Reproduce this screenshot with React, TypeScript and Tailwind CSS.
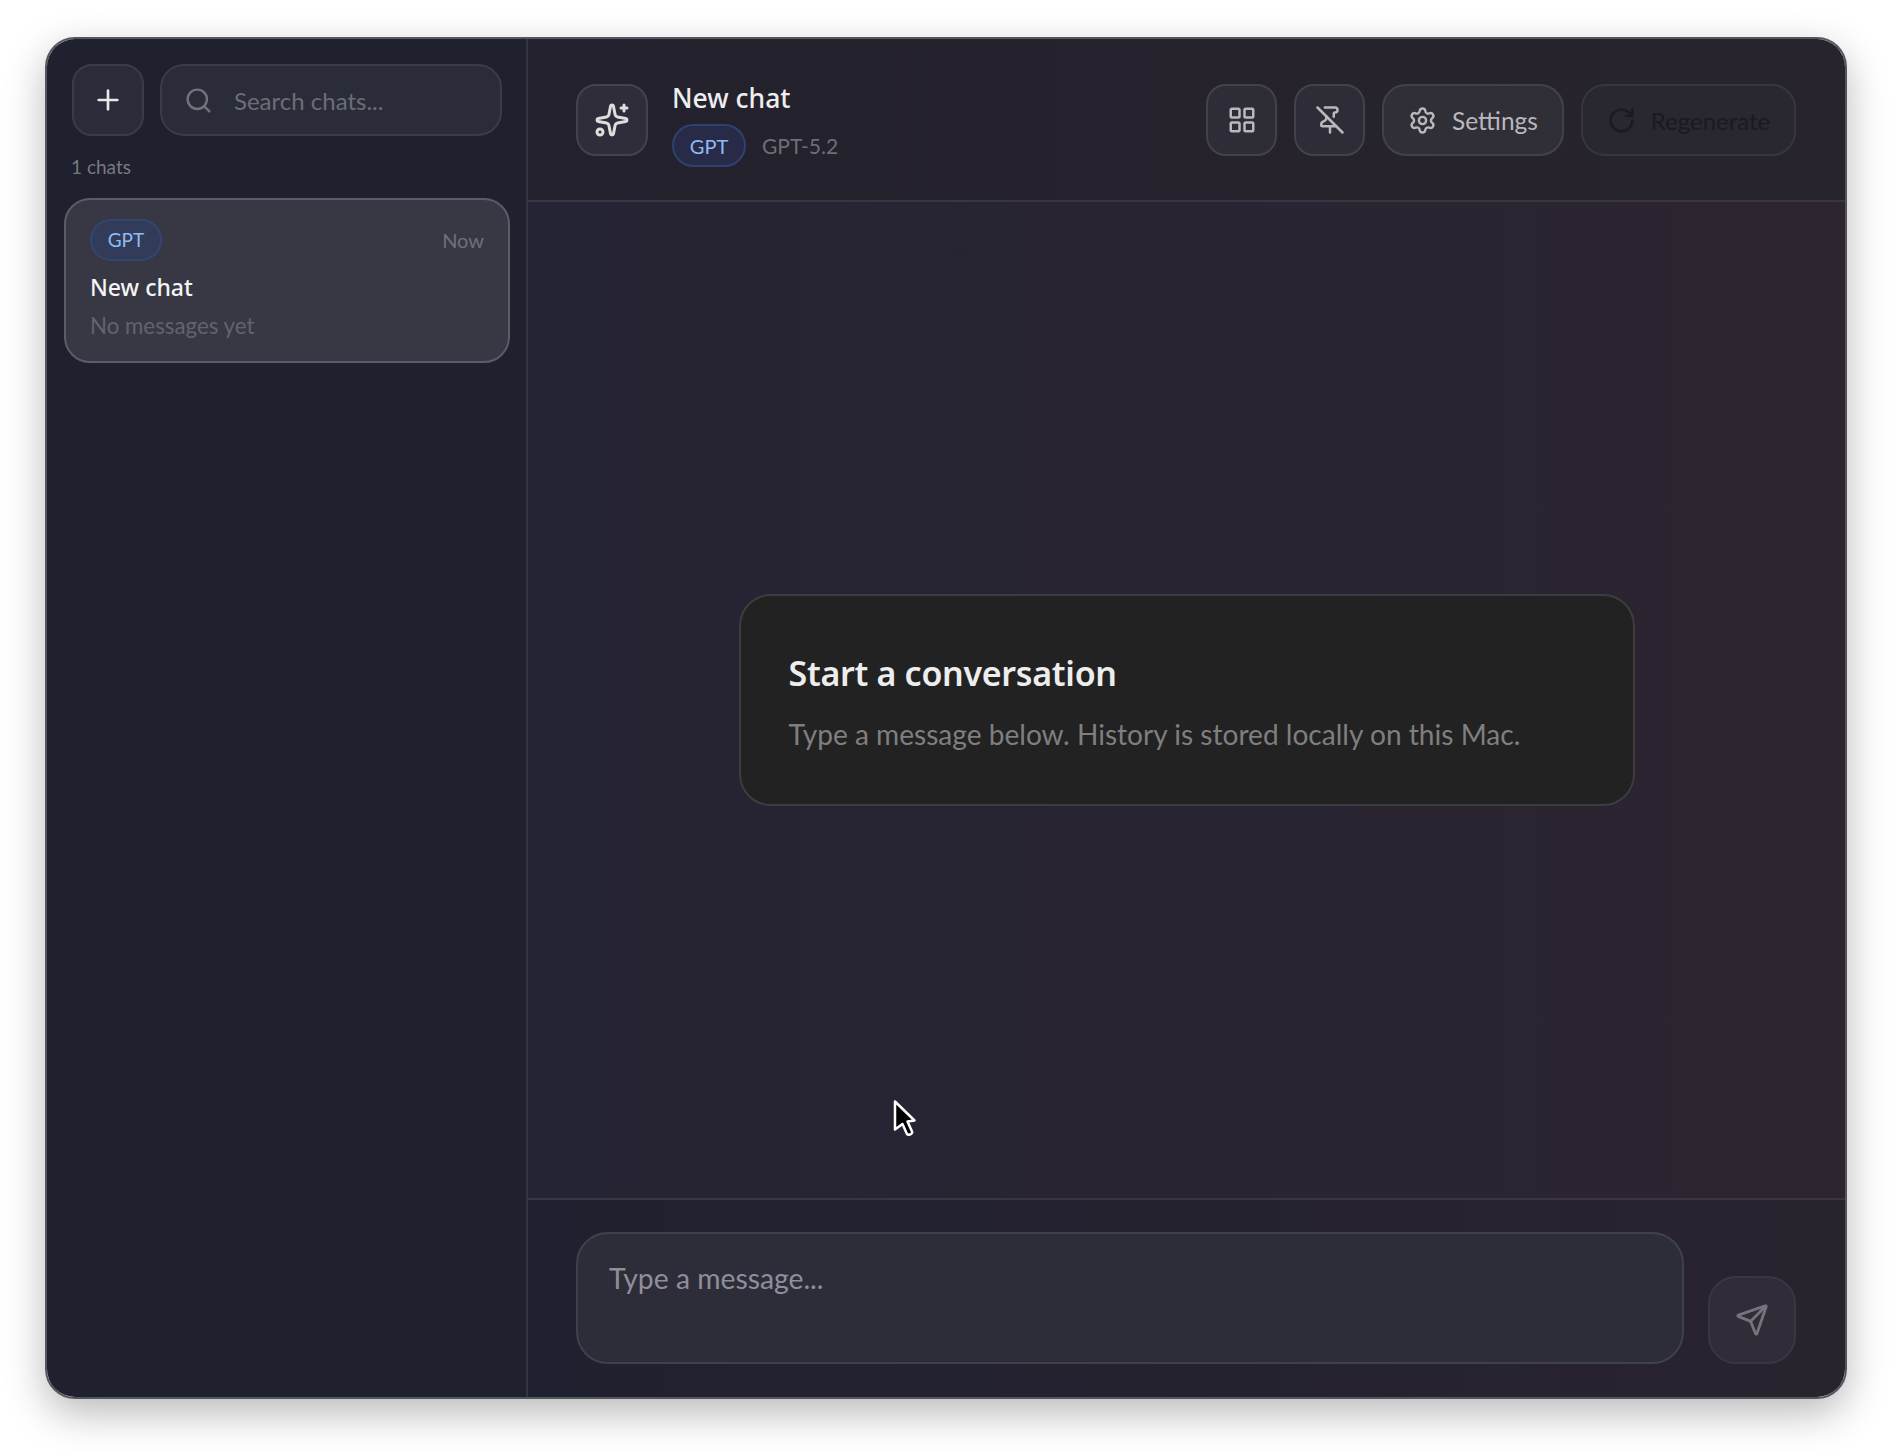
import { Plus, Search, Sparkles, LayoutGrid, PinOff, Settings, RotateCw, Send } from "lucide-react";

export default function App() {
  return (
    <div className="relative h-[1452px] w-[1892px] overflow-hidden bg-white pl-[45px] pt-[37px] font-['Lato',sans-serif]">
      <div className="flex h-[1362px] w-[1802px] overflow-hidden rounded-[30px] border-2 border-[#55555e] shadow-[0_14px_40px_rgba(0,0,0,0.28)]">
        {/* Sidebar */}
        <aside className="flex h-full w-[481px] shrink-0 flex-col border-r-2 border-[#34343f] bg-[#1f212e] pl-[17px] pr-[15px] pt-[25px]">
          <div className="flex gap-[16px] pl-[8px] pr-[9px]">
            <button className="flex h-[72px] w-[72px] shrink-0 items-center justify-center rounded-[20px] border-2 border-[#3b3c47] bg-[#2b2c39] text-[#e8e8ea]">
              <Plus size={32} strokeWidth={2} />
            </button>
            <div className="flex h-[72px] min-w-0 flex-1 items-center gap-[21px] rounded-[24px] border-2 border-[#3b3c47] bg-[#2b2c39] pl-[22px]">
              <Search size={29} strokeWidth={2} className="shrink-0 text-[#72727b]" />
              <input
                placeholder="Search chats..."
                className="mt-[2px] w-full bg-transparent text-[24px] outline-none placeholder:text-[#6d6d77]"
              />
            </div>
          </div>
          <div className="mt-[18px] pl-[7px] text-[19px] leading-[26px] text-[#797981]">1 chats</div>
          <div className="mt-[18px] h-[165px] w-[446px] rounded-[26px] border-2 border-[#5b5c67] bg-[#373844] px-[24px] pt-[19px]">
            <div className="flex items-center justify-between">
              <span className="flex h-[42px] w-[72px] items-center justify-center rounded-full border-2 border-[#33466f] bg-[#323c5a] text-[19px] text-[#8fbcf5]">
                GPT
              </span>
              <span className="text-[20px] text-[#6f6f79]">Now</span>
            </div>
            <div className="mt-[9px] font-['Noto_Sans',sans-serif] text-[23px] font-medium leading-[34px] text-[#f4f4f5]">New chat</div>
            <div className="mt-[7px] text-[22.3px] leading-[30px] text-[#62636d]">No messages yet</div>
          </div>
        </aside>

        {/* Main */}
        <main className="flex h-full min-w-0 flex-1 flex-col">
          <header className="flex h-[163px] shrink-0 items-start justify-between border-b-2 border-[#383741] bg-linear-to-r from-[#23212d] to-[#28242d] pl-[48px] pr-[49px] pt-[45px]">
            <div className="flex gap-[24px]">
              <button className="flex h-[72px] w-[72px] items-center justify-center rounded-[20px] border-2 border-[#44434d] bg-[#2e2d39] text-[#dededf]">
                <Sparkles size={36} strokeWidth={2} />
              </button>
              <div className="-mt-[5px]">
                <div className="font-['Noto_Sans',sans-serif] text-[26.5px] font-medium leading-[38px] text-[#eeeeef]">New chat</div>
                <div className="mt-[7px] flex items-center gap-[16px]">
                  <span className="flex h-[43px] w-[74px] items-center justify-center rounded-full border-2 border-[#2e4170] bg-[#272b47] text-[20px] text-[#8fbcf5]">
                    GPT
                  </span>
                  <span className="text-[21px] text-[#6f6e76]">GPT-5.2</span>
                </div>
              </div>
            </div>
            <div className="flex gap-[17px]">
              <button className="flex h-[72px] w-[71px] items-center justify-center rounded-[20px] border-2 border-[#43424b] bg-[#2e2d37] text-[#b9b8bc]">
                <LayoutGrid size={30} strokeWidth={2} />
              </button>
              <button className="flex h-[72px] w-[71px] items-center justify-center rounded-[20px] border-2 border-[#43424b] bg-[#2e2d37] text-[#b9b8bc]">
                <PinOff size={30} strokeWidth={2} />
              </button>
              <button className="flex h-[72px] w-[182px] items-center justify-center gap-[15px] rounded-[24px] border-2 border-[#43424b] bg-[#302e37] text-[24.5px] text-[#b9b8bc]">
                <Settings size={29} strokeWidth={2} />
                <span className="mt-[2px]">Settings</span>
              </button>
              <button className="flex h-[72px] w-[215px] items-center justify-center gap-[15px] rounded-[24px] border-2 border-[#37353f] bg-[#29272f] text-[24px] text-[#1b1a20]">
                <RotateCw size={29} strokeWidth={2} />
                <span className="mt-[2px]">Regenerate</span>
              </button>
            </div>
          </header>

          <section className="flex min-h-0 flex-1 items-center justify-center bg-linear-to-r from-[#252434] to-[#2d2530]">
            <div className="h-[212px] w-[896px] rounded-[32px] border-2 border-[#3d3d3f] bg-[#222222] pl-[48px] pt-[54px]">
              <h1 className="font-['Noto_Sans',sans-serif] text-[34px] font-semibold leading-[46px] tracking-[-0.3px] text-[#ededee]">Start a conversation</h1>
              <p className="mt-[19px] text-[28.1px] leading-[38px] text-[#7f7f80]">
                Type a message below. History is stored locally on this Mac.
              </p>
            </div>
          </section>

          <footer className="flex h-[199px] shrink-0 items-end gap-[24px] border-t-2 border-[#383741] bg-linear-to-r from-[#202130] to-[#29232e] pb-[33px] pl-[48px] pr-[49px]">
            <textarea
              placeholder="Type a message..."
              className="h-[132px] min-w-0 flex-1 resize-none rounded-[32px] border-2 border-[#41414c] bg-[#2d2d39] pl-[31px] pt-[25px] text-[28.3px] leading-[38px] outline-none placeholder:text-[#8f8f9b]"
            />
            <button className="flex h-[88px] w-[88px] shrink-0 items-center justify-center rounded-[28px] border-2 border-[#393742] bg-[#312c37] text-[#75737b]">
              <Send size={34} strokeWidth={2} />
            </button>
          </footer>
        </main>
      </div>

      {/* Mouse cursor */}
      <svg className="absolute left-[892px] top-[1099px]" width="26" height="38" viewBox="0 0 26 38">
        <path
          d="M3 2.5 L22.5 21.5 L15.5 22.5 L20 32.5 C20.5 34 19.5 35 18 35.5 C16.5 36 15 35.5 14.5 34 L10.5 25 L3 30.5 Z"
          fill="#000"
          stroke="#fff"
          strokeWidth="2.5"
          strokeLinejoin="round"
        />
      </svg>
    </div>
  );
}
